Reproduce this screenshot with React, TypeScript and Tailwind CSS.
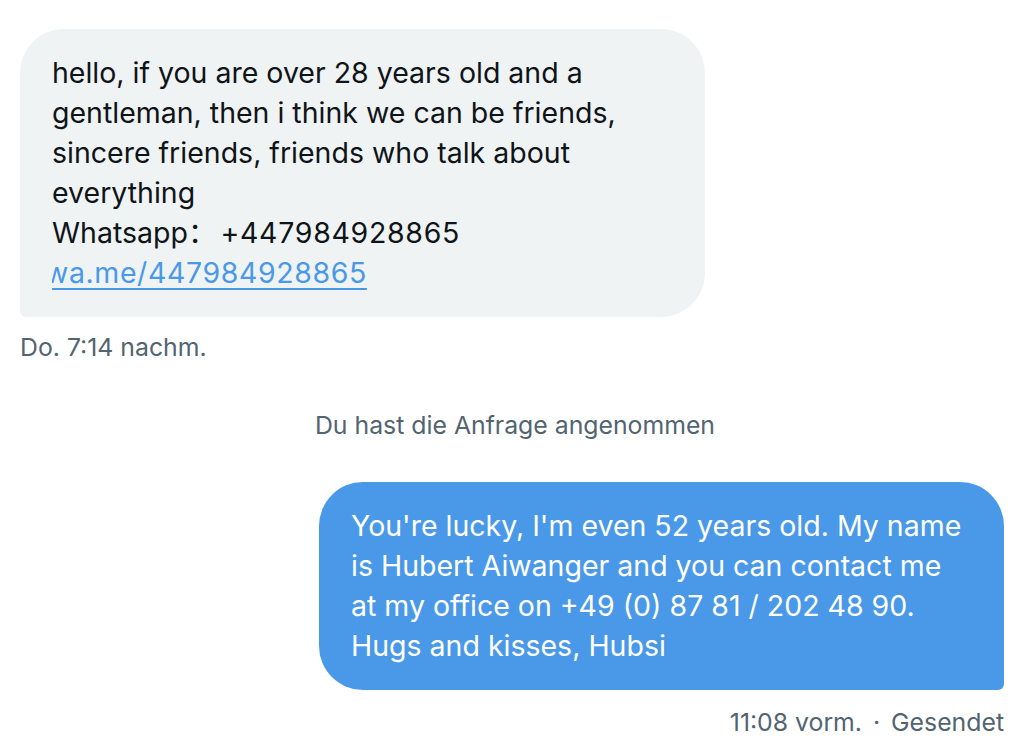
export default function App() {
  return (
    <div
      className="w-[1030px] h-[756px] bg-white overflow-hidden pt-[29px] pl-[20px] pr-[26px] flex flex-col"
      style={{ fontFamily: 'Inter, "Noto Sans CJK SC", sans-serif' }}
    >
      {/* incoming */}
      <div className="flex flex-col items-start">
        <div className="w-[685px] bg-[#eff3f4] rounded-[44px] rounded-bl-[6px] px-[32px] py-[24px] text-[28.5px] leading-[40px] text-[#0f1419]">
          <div>
            hello, if you are over 28 years old and a gentleman, then i think
            we can be friends, sincere friends, friends who talk about
            everything
          </div>
          <div>
            Whatsapp：<span className="pl-[4px] tracking-[0.7px]">+447984928865</span>
          </div>
          <div className="overflow-hidden">
            <span className="block -ml-[7px] text-[#4a99e9] underline underline-offset-[5px] decoration-[2px] tracking-[0.6px]">
              wa.me/447984928865
            </span>
          </div>
        </div>
        <div className="mt-[15px] text-[24.8px] leading-[30px] text-[#536471]">
          Do. 7:14 nachm.
        </div>
      </div>

      {/* system */}
      <div className="mt-[48px] text-center text-[24.8px] leading-[30px] text-[#536471] pl-[6px]">
        Du hast die Anfrage angenommen
      </div>

      {/* outgoing */}
      <div className="mt-[42px] flex flex-col items-end">
        <div className="w-[685px] bg-[#4a99e9] rounded-[44px] rounded-br-[6px] px-[32px] py-[24px] text-[28.5px] leading-[40px] text-white">
          You're lucky, I'm even 52 years old. My name is Hubert Aiwanger and
          you can contact me at my office on +49 (0) 87 81 / 202 48 90. Hugs
          and kisses, Hubsi
        </div>
        <div className="mt-[17px] text-[24.8px] leading-[30px] text-[#536471]">
          11:08 vorm. <span className="px-[4px]">·</span> Gesendet
        </div>
      </div>
    </div>
  );
}
